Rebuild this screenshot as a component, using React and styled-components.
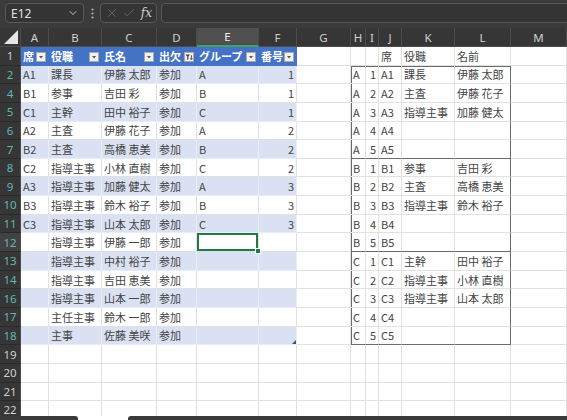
import React from "react";
import styled, { createGlobalStyle, css } from "styled-components";
import { ChevronDown, X, Check } from "lucide-react";

const GlobalStyle = createGlobalStyle`
  html, body { margin: 0; padding: 0; background: #3b3b3b; }
  body { font-family: "Noto Sans CJK JP", "Noto Sans", sans-serif; }
`;

const Window = styled.div`
  width: 567px;
  height: 420px;
  display: flex;
  flex-direction: column;
  overflow: hidden;
  background: #3b3b3b;
`;

const FormulaBar = styled.div`
  height: 28px;
  flex: none;
  display: flex;
  align-items: flex-start;
  padding: 3px 0 0 5px;
  box-sizing: border-box;
  overflow: hidden;
`;

const Box = styled.div`
  height: 20px;
  box-sizing: border-box;
  border: 1px solid #585858;
  border-radius: 4px;
  background: #343434;
  display: flex;
  align-items: center;
  flex: none;
`;

const NameBox = styled(Box)`
  width: 79px;
  padding: 0 4px 0 5px;
  justify-content: space-between;
  color: #e2e2e2;
  font-family: "Noto Sans", sans-serif;
  font-size: 12px;
`;

const Dots = styled.div`
  width: 16px;
  height: 20px;
  flex: none;
  display: flex;
  align-items: center;
  justify-content: center;
`;

const FxBox = styled(Box)`
  width: 57px;
  padding: 0 4px;
  gap: 3px;
`;

const Fx = styled.span`
  font-family: "DejaVu Serif", serif;
  font-style: italic;
  font-size: 12px;
  color: #d0d0d0;
  margin-left: 2px;
`;

const FormulaInput = styled(Box)`
  flex: 1;
  margin-left: 4px;
  margin-right: -8px;
`;

const Sheet = styled.div`
  flex: 1;
  min-height: 0;
  overflow: hidden;
  display: grid;
  grid-template-columns: 21px 28px 53px 55px 40px 62px 38px 54px 15px 13px 23px 53px 56px 1fr;
  grid-template-rows: 19px;
  grid-auto-rows: 18.65px;
  background: #fff;
`;

const Corner = styled.div`
  background: #363636;
  border-right: 1px solid #4c4c4c;
  border-bottom: 1px solid #4c4c4c;
  box-sizing: border-box;
  display: flex;
  align-items: flex-end;
  justify-content: flex-end;
  padding: 0 2px 2px 0;
`;

const ColHead = styled.div`
  background: ${(p) => (p.$selected ? "#505050" : "#363636")};
  color: ${(p) => (p.$selected ? "#f0f0f0" : "#cfcfcf")};
  font-family: "Noto Sans", sans-serif;
  font-size: 11.5px;
  display: flex;
  align-items: center;
  justify-content: center;
  box-sizing: border-box;
  border-right: 1px solid #4c4c4c;
  border-bottom: ${(p) => (p.$selected ? "2px solid #3da466" : "1px solid #4c4c4c")};
  overflow: hidden;
`;

const RowHead = styled.div`
  background: ${(p) => (p.$selected ? "#424242" : "#363636")};
  color: ${(p) => (p.$filtered ? "#62b7b2" : "#cfcfcf")};
  font-family: "Noto Sans", sans-serif;
  font-size: 11.5px;
  display: flex;
  align-items: center;
  justify-content: center;
  box-sizing: border-box;
  border-right: 1px solid #4c4c4c;
  border-bottom: 1px solid #2a2a2a;
`;

const FILLS = { head: "#4472c4", band: "#d9e1f2", plain: "#ffffff" };
const GRID = { head: "#4472c4", band: "#e8edf6", plain: "#e1e1e1" };

const Cell = styled.div`
  position: relative;
  box-sizing: border-box;
  background: ${(p) => FILLS[p.$fill]};
  border-right: 1px solid ${(p) => (p.$boxRight ? "#6a6a6a" : GRID[p.$fill])};
  border-bottom: 1px solid ${(p) => (p.$boxBottom ? "#6a6a6a" : GRID[p.$fill])};
  color: ${(p) => (p.$fill === "head" ? "#ffffff" : "#444444")};
  font-weight: ${(p) => (p.$fill === "head" ? 700 : 400)};
  font-size: 11px;
  padding: 0 2px;
  display: flex;
  align-items: center;
  justify-content: ${(p) => (p.$right ? "flex-end" : "space-between")};
  white-space: nowrap;
  overflow: hidden;
  ${(p) => {
    const s = [];
    if (p.$boxLeft) s.push("inset 1px 0 0 #6a6a6a");
    if (p.$boxTop) s.push("inset 0 1px 0 #6a6a6a");
    if (p.$active) s.push("inset 0 0 0 2px #1f7a45");
    return s.length ? css`box-shadow: ${s.join(", ")};` : "";
  }}
  ${(p) =>
    p.$active &&
    css`
      overflow: visible;
      &::after {
        content: "";
        position: absolute;
        right: -3px;
        bottom: -3px;
        width: 4px;
        height: 4px;
        background: #1f7a45;
        border: 1px solid #fff;
        z-index: 2;
      }
    `}
  ${(p) =>
    p.$tableEnd &&
    css`
      &::after {
        content: "";
        position: absolute;
        right: 0;
        bottom: 0;
        border-style: solid;
        border-width: 0 0 4px 4px;
        border-color: transparent transparent #2f5597 transparent;
      }
    `}
`;

const FilterBtn = styled.span`
  width: 10px;
  height: 10px;
  flex: none;
  margin-top: 3px;
  background: #f2f2f2;
  border: 1px solid #a8a8a8;
  box-sizing: border-box;
  display: flex;
  align-items: center;
  justify-content: center;
`;

const BottomBar = styled.div`
  height: 4px;
  flex: none;
  display: flex;
  background: #fff;
`;

const Tab = styled.div`
  background: #3a3a3a;
  width: ${(p) => p.$w || "auto"};
  flex: ${(p) => (p.$grow ? 1 : "none")};
  margin-left: ${(p) => p.$ml || 0};
  border-radius: ${(p) => (p.$grow ? "3px 0 0 0" : "0 3px 0 0")};
`;

const COLS = ["A", "B", "C", "D", "E", "F", "G", "H", "I", "J", "K", "L", "M"];
const ROW_NUMS = [1, 2, 4, 5, 6, 7, 8, 9, 10, 11, 12, 13, 14, 16, 17, 18, 19, 20, 21, 22];

const LEFT = [
  ["席", "役職", "氏名", "出欠", "グループ", "番号"],
  ["A1", "課長", "伊藤 太郎", "参加", "A", "1"],
  ["B1", "参事", "吉田 彩", "参加", "B", "1"],
  ["C1", "主幹", "田中 裕子", "参加", "C", "1"],
  ["A2", "主査", "伊藤 花子", "参加", "A", "2"],
  ["B2", "主査", "高橋 恵美", "参加", "B", "2"],
  ["C2", "指導主事", "小林 直樹", "参加", "C", "2"],
  ["A3", "指導主事", "加藤 健太", "参加", "A", "3"],
  ["B3", "指導主事", "鈴木 裕子", "参加", "B", "3"],
  ["C3", "指導主事", "山本 太郎", "参加", "C", "3"],
  ["", "指導主事", "伊藤 一郎", "参加", "", ""],
  ["", "指導主事", "中村 裕子", "参加", "", ""],
  ["", "指導主事", "吉田 恵美", "参加", "", ""],
  ["", "指導主事", "山本 一郎", "参加", "", ""],
  ["", "主任主事", "鈴木 一郎", "参加", "", ""],
  ["", "主事", "佐藤 美咲", "参加", "", ""],
];

const RIGHT_HEAD = ["", "", "席", "役職", "名前"];
const RIGHT = [
  ["A", "1", "A1", "課長", "伊藤 太郎"],
  ["A", "2", "A2", "主査", "伊藤 花子"],
  ["A", "3", "A3", "指導主事", "加藤 健太"],
  ["A", "4", "A4", "", ""],
  ["A", "5", "A5", "", ""],
  ["B", "1", "B1", "参事", "吉田 彩"],
  ["B", "2", "B2", "主査", "高橋 恵美"],
  ["B", "3", "B3", "指導主事", "鈴木 裕子"],
  ["B", "4", "B4", "", ""],
  ["B", "5", "B5", "", ""],
  ["C", "1", "C1", "主幹", "田中 裕子"],
  ["C", "2", "C2", "指導主事", "小林 直樹"],
  ["C", "3", "C3", "指導主事", "山本 太郎"],
  ["C", "4", "C4", "", ""],
  ["C", "5", "C5", "", ""],
];

function DropIcon({ filtered }) {
  if (filtered) {
    return (
      <svg width="8" height="8" viewBox="0 0 8 8">
        <path d="M0.5 1.5h4.6L3.4 3.6v2.6l-1.2 0.7V3.6z" fill="#444" />
        <path d="M6.4 2.2v4.4M5.3 5.4l1.1 1.3 1.1-1.3" stroke="#444" strokeWidth="0.9" fill="none" />
      </svg>
    );
  }
  return (
    <svg width="8" height="8" viewBox="0 0 8 8">
      <path d="M2 3h4L4 5.4z" fill="#555" />
    </svg>
  );
}

function cellProps(r, c) {
  const p = { $fill: "plain", value: "" };
  if (c < 6 && r < LEFT.length) {
    p.$fill = r === 0 ? "head" : r % 2 === 1 ? "band" : "plain";
    p.value = LEFT[r][c];
    if (c === 5 && r > 0) p.$right = true;
    if (r === 10 && c === 4) p.$active = true;
    if (r === LEFT.length - 1 && c === 5) p.$tableEnd = true;
  } else if (c >= 7 && c <= 11) {
    const k = c - 7;
    if (r === 0) p.value = RIGHT_HEAD[k];
    if (r >= 1 && r <= RIGHT.length) {
      p.value = RIGHT[r - 1][k];
      if (k === 0) p.$boxLeft = true;
      if (k === 4) p.$boxRight = true;
      if (r === 1) p.$boxTop = true;
      if (r % 5 === 0) p.$boxBottom = true;
      if (k === 1) p.$right = true;
    }
  }
  return p;
}

export default function App() {
  return (
    <>
      <GlobalStyle />
      <Window>
        <FormulaBar>
          <NameBox>
            <span>E12</span>
            <ChevronDown size={12} color="#c4c4c4" strokeWidth={2} />
          </NameBox>
          <Dots>
            <svg width="3" height="11" viewBox="0 0 3 11">
              <circle cx="1.5" cy="1.5" r="1.1" fill="#b0b0b0" />
              <circle cx="1.5" cy="5.5" r="1.1" fill="#b0b0b0" />
              <circle cx="1.5" cy="9.5" r="1.1" fill="#b0b0b0" />
            </svg>
          </Dots>
          <FxBox>
            <X size={14} color="#6e6e6e" strokeWidth={1.4} />
            <Check size={14} color="#6e6e6e" strokeWidth={1.4} />
            <Fx>fx</Fx>
          </FxBox>
          <FormulaInput />
        </FormulaBar>

        <Sheet>
          <Corner>
            <svg width="14" height="14" viewBox="0 0 14 14">
              <path d="M14 0V14H0z" fill="#e6e6e6" />
            </svg>
          </Corner>
          {COLS.map((c) => (
            <ColHead key={c} $selected={c === "E"}>
              {c}
            </ColHead>
          ))}
          {ROW_NUMS.map((n, r) => (
            <React.Fragment key={n}>
              <RowHead $filtered={r >= 1 && r <= 15} $selected={n === 12}>
                {n}
              </RowHead>
              {COLS.map((col, c) => {
                const { value, ...p } = cellProps(r, c);
                return (
                  <Cell key={col} {...p}>
                    <span>{value}</span>
                    {p.$fill === "head" && (
                      <FilterBtn>
                        <DropIcon filtered={c === 3} />
                      </FilterBtn>
                    )}
                  </Cell>
                );
              })}
            </React.Fragment>
          ))}
        </Sheet>

        <BottomBar>
          <Tab $w="78px" />
          <Tab $grow $ml="50px" />
        </BottomBar>
      </Window>
    </>
  );
}
